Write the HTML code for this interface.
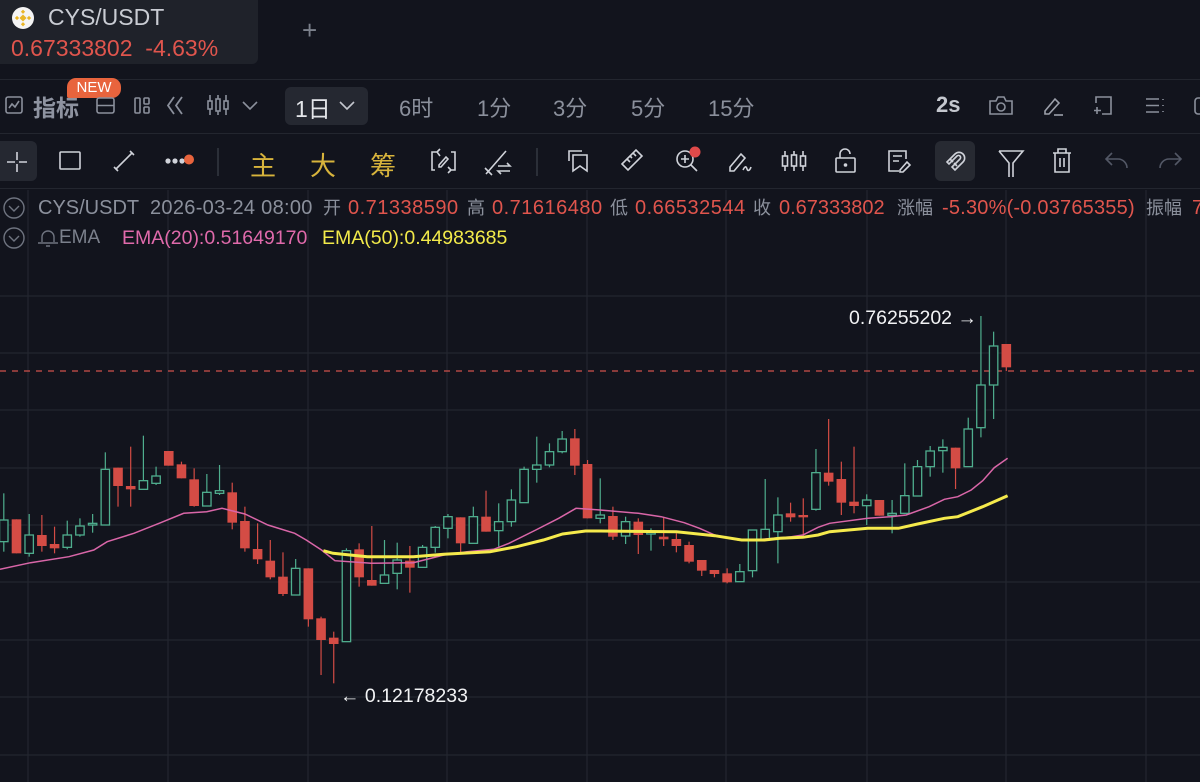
<!DOCTYPE html>
<html><head><meta charset="utf-8"><style>
*{margin:0;padding:0;box-sizing:border-box}
body{width:1200px;height:782px;background:#12141d;overflow:hidden;position:relative;font-family:"Liberation Sans","Noto Sans CJK SC",sans-serif;color:#8b909c}
.a{position:absolute;white-space:nowrap}
.hl{position:absolute;left:0;width:1200px;height:1px;background:#23262f}
.t{font-size:22px;color:#8b909c;top:91px}
.h{top:196px;font-size:20px;line-height:24px;height:24px;color:#8b909c}
.hc{font-size:18px}
.r,.h.r{color:#e0554d}
.n{letter-spacing:0.5px}
svg.i{position:absolute;overflow:visible}
</style></head><body>
<svg id="ch" class="a" style="left:0;top:0" width="1200" height="782"></svg>

<div class="a" style="left:0;top:0;width:258px;height:64px;background:#1f222a;border-radius:0 0 6px 0"></div>
<svg class="i" style="left:12px;top:7px" width="22" height="22"><circle cx="11" cy="11" r="11" fill="#f4f4f4"/><g fill="#e9b627"><rect x="8.5" y="8.5" width="5" height="5" transform="rotate(45 11 11)"/><rect x="9.5" y="3.2" width="3" height="3" transform="rotate(45 11 4.7)"/><rect x="9.5" y="15.8" width="3" height="3" transform="rotate(45 11 17.3)"/><rect x="3.5" y="9.5" width="3" height="3" transform="rotate(45 5 11)"/><rect x="15.5" y="9.5" width="3" height="3" transform="rotate(45 17 11)"/></g></svg>
<div class="a" style="left:48px;top:4px;font-size:23px;color:#c9ccd3">CYS/USDT</div>
<div class="a r" style="left:11px;top:35px;font-size:23px">0.67333802&nbsp; -4.63%</div>
<div class="a" style="left:302px;top:15px;font-size:26px;font-weight:300;color:#7b808b">+</div>

<div class="hl" style="top:79px"></div>
<div class="hl" style="top:133px"></div>
<div class="hl" style="top:188px"></div>

<!-- row 2 -->
<svg class="i" style="left:5px;top:96px" width="18" height="18" fill="none" stroke="#8b909c" stroke-width="1.6"><rect x="1" y="1" width="16" height="16" rx="2"/><path d="M4 12l3-4 3 3 4-6"/></svg>
<div class="a" style="left:33px;top:89px;font-size:23px;font-weight:bold;color:#8e93a0">指标</div>
<div class="a" style="left:67px;top:78px;width:54px;height:20px;background:#e8643d;border-radius:9px 9px 9px 2px;color:#fff;font-size:15px;text-align:center;line-height:20px">NEW</div>
<svg class="i" style="left:96px;top:97px" width="20" height="18" fill="none" stroke="#8b909c" stroke-width="1.6"><rect x="1" y="1" width="17" height="15" rx="2"/><path d="M1 8.5h17"/></svg>
<svg class="i" style="left:134px;top:97px" width="17" height="17" fill="none" stroke="#8b909c" stroke-width="1.6"><rect x="1" y="1" width="5" height="15" rx="1"/><rect x="10" y="1" width="5" height="6" rx="1"/><rect x="10" y="10" width="5" height="6" rx="1"/></svg>
<svg class="i" style="left:166px;top:96px" width="22" height="19" fill="none" stroke="#8b909c" stroke-width="1.8"><path d="M8 1L2 9.5 8 18M16 1L10 9.5 16 18"/></svg>
<svg class="i" style="left:207px;top:94px" width="22" height="22" fill="none" stroke="#8b909c" stroke-width="1.6"><path d="M3 1v20M11 1v20M19 1v20"/><rect x="1" y="7" width="4" height="8" fill="#12141d"/><rect x="9" y="5" width="4" height="12" fill="#12141d"/><rect x="17" y="7" width="4" height="8" fill="#12141d"/></svg>
<svg class="i" style="left:242px;top:101px" width="16" height="9" fill="none" stroke="#8b909c" stroke-width="1.6"><path d="M1 1l7 7 7-7"/></svg>
<div class="a" style="left:285px;top:87px;width:83px;height:38px;background:#252831;border-radius:6px"></div>
<div class="a" style="left:295px;top:90px;font-size:23px;color:#e4e6ea">1日</div>
<svg class="i" style="left:339px;top:101px" width="16" height="9" fill="none" stroke="#c4c7ce" stroke-width="1.6"><path d="M1 1l7 7 7-7"/></svg>
<div class="a t" style="left:399px">6时</div>
<div class="a t" style="left:477px">1分</div>
<div class="a t" style="left:553px">3分</div>
<div class="a t" style="left:631px">5分</div>
<div class="a t" style="left:708px">15分</div>
<div class="a" style="left:936px;top:92px;font-size:22px;font-weight:bold;color:#c4c7ce">2s</div>
<svg class="i" style="left:989px;top:96px" width="24" height="19" fill="none" stroke="#8b909c" stroke-width="1.6"><path d="M1 5h6l2-4h6l2 4h6v13H1z"/><circle cx="12" cy="11" r="4"/></svg>
<svg class="i" style="left:1042px;top:95px" width="22" height="22" fill="none" stroke="#9ca0aa" stroke-width="1.6"><path d="M3 16l10-12 4 4-10 11H3z"/><path d="M12 20h9"/></svg>
<svg class="i" style="left:1093px;top:96px" width="20" height="20" fill="none" stroke="#8b909c" stroke-width="1.6"><path d="M3 7V1h15v17h-9"/><path d="M4 11v7M1 14.5h7"/></svg>
<svg class="i" style="left:1145px;top:98px" width="20" height="16" fill="none" stroke="#8b909c" stroke-width="1.6"><path d="M1 1h13M1 7.5h13M1 14h13M18 1v1M18 7v1M18 13v1"/></svg>
<svg class="i" style="left:1194px;top:97px" width="10" height="18" fill="none" stroke="#8b909c" stroke-width="1.6"><rect x="1" y="1" width="14" height="16" rx="3"/></svg>

<!-- row 3 -->
<div class="a" style="left:0;top:141px;width:37px;height:40px;background:#252831;border-radius:0 6px 6px 0"></div>
<svg class="i" style="left:6px;top:151px" width="22" height="22" fill="none" stroke="#d0d3da" stroke-width="1.6"><path d="M11 1v8M11 13v8M1 11h8M13 11h8"/></svg>
<svg class="i" style="left:59px;top:151px" width="22" height="19" fill="none" stroke="#d0d3da" stroke-width="1.6"><rect x="1" y="1" width="20" height="17" rx="1"/></svg>
<svg class="i" style="left:113px;top:150px" width="22" height="22" fill="none" stroke="#d0d3da" stroke-width="1.6"><path d="M3 19L19 3M1 17l4 4M17 1l4 4"/></svg>
<svg class="i" style="left:164px;top:153px" width="32" height="14"><circle cx="4" cy="8" r="2.6" fill="#d0d3da"/><circle cx="11" cy="8" r="2.6" fill="#d0d3da"/><circle cx="18" cy="8" r="2.6" fill="#d0d3da"/><circle cx="25" cy="6.5" r="5" fill="#e8643d"/></svg>
<div class="a" style="left:217px;top:148px;width:2px;height:28px;background:#2b2f38"></div>
<div class="a" style="left:250px;top:146px;font-size:26px;color:#d8b43c">主</div>
<div class="a" style="left:310px;top:146px;font-size:26px;color:#d8b43c">大</div>
<div class="a" style="left:370px;top:146px;font-size:26px;color:#d8b43c">筹</div>
<svg class="i" style="left:431px;top:148px" width="26" height="28" fill="none" stroke="#d0d3da" stroke-width="1.6"><path d="M6 4H1v18h3M20 4h4v18h-5M9 8l-3-4 3-3M17 19l3 3-3 3M8 17l7-8 2 2-7 8H8z"/></svg>
<svg class="i" style="left:484px;top:150px" width="28" height="26" fill="none" stroke="#d0d3da" stroke-width="1.6"><path d="M2 24L22 1M1 18l7 7M14 16h12l-3-3M26 21H14l3 3"/></svg>
<div class="a" style="left:536px;top:148px;width:2px;height:28px;background:#2b2f38"></div>
<svg class="i" style="left:568px;top:150px" width="22" height="22" fill="none" stroke="#d0d3da" stroke-width="1.6"><path d="M1 11V1h13"/><path d="M5 5h14v16l-7-5-7 5z"/></svg>
<svg class="i" style="left:620px;top:148px" width="24" height="24" fill="none" stroke="#d0d3da" stroke-width="1.6"><path d="M2 16L16 2l6 6L8 22z"/><path d="M7 11l3 3M10 8l2 2M13 5l3 3"/></svg>
<svg class="i" style="left:675px;top:148px" width="28" height="28" fill="none" stroke="#d0d3da" stroke-width="1.6"><circle cx="10" cy="11" r="8"/><path d="M16 17l6 6M6 11h8M10 7v8"/><circle cx="20" cy="4" r="5.5" fill="#e04a4a" stroke="none"/></svg>
<svg class="i" style="left:728px;top:150px" width="26" height="24" fill="none" stroke="#d0d3da" stroke-width="1.6"><path d="M2 17L13 4l4 4L6 21H2z"/><path d="M15 20c2-4 3-4 4-1s3 1 4-2"/></svg>
<svg class="i" style="left:781px;top:150px" width="26" height="22" fill="none" stroke="#d0d3da" stroke-width="1.6"><path d="M4 1v20M13 1v20M22 1v20"/><rect x="1.5" y="6" width="5" height="10" fill="#12141d"/><rect x="10.5" y="5" width="5" height="11" fill="#12141d"/><rect x="19.5" y="6" width="5" height="10" fill="#12141d"/></svg>
<svg class="i" style="left:835px;top:148px" width="22" height="26" fill="none" stroke="#d0d3da" stroke-width="1.6"><path d="M5 10V6a5 5 0 0 1 10 0"/><rect x="1" y="10" width="19" height="14" rx="1"/><circle cx="10.5" cy="17" r="1" fill="#d0d3da"/></svg>
<svg class="i" style="left:888px;top:150px" width="24" height="24" fill="none" stroke="#d0d3da" stroke-width="1.6"><path d="M11 21H1V1h17v8M5 6h9M5 11h6"/><path d="M12 20l7-8 3 3-7 7h-3z"/></svg>
<div class="a" style="left:935px;top:141px;width:40px;height:40px;background:#272a32;border-radius:6px"></div>
<svg class="i" style="left:942px;top:149px" width="26" height="26" fill="none" stroke="#d0d3da" stroke-width="1.6"><path d="M5 13L13 5a5 5 0 0 1 8 8l-8 8-3-3 8-8a1.5 1.5 0 0 0-3-3l-8 8z"/><path d="M8 10l3 3M12 14l3 3"/></svg>
<svg class="i" style="left:998px;top:150px" width="26" height="28" fill="none" stroke="#d0d3da" stroke-width="1.6"><path d="M1 1h24L15 13v14M11 27V13L1 1"/></svg>
<svg class="i" style="left:1052px;top:148px" width="20" height="26" fill="none" stroke="#d0d3da" stroke-width="1.6"><path d="M1 5h18M6 5V1h8v4M3 5v19h14V5M8 10v9M12 10v9"/></svg>
<svg class="i" style="left:1105px;top:152px" width="24" height="18" fill="none" stroke="#535866" stroke-width="1.6"><path d="M7 1L1 7l6 6M1 7h12a9 9 0 0 1 9 9"/></svg>
<svg class="i" style="left:1158px;top:152px" width="24" height="18" fill="none" stroke="#535866" stroke-width="1.6"><path d="M17 1l6 6-6 6M23 7H11a9 9 0 0 0-9 9"/></svg>

<!-- info rows -->
<svg class="i" style="left:3px;top:197px" width="22" height="22" fill="none" stroke="#6f7480" stroke-width="1.4"><circle cx="11" cy="11" r="10"/><path d="M6 9l5 5 5-5"/></svg>
<div class="a h" style="left:38px">CYS/USDT</div>
<div class="a h" style="left:150px;letter-spacing:0.3px">2026-03-24 08:00</div>
<div class="a h hc" style="left:323px">开</div><div class="a h r n" style="left:348px">0.71338590</div>
<div class="a h hc" style="left:467px">高</div><div class="a h r n" style="left:492px">0.71616480</div>
<div class="a h hc" style="left:610px">低</div><div class="a h r n" style="left:635px">0.66532544</div>
<div class="a h hc" style="left:753px">收</div><div class="a h r" style="left:779px">0.67333802</div>
<div class="a h hc" style="left:897px">涨幅</div><div class="a h r" style="left:942px;letter-spacing:0.2px">-5.30%(-0.03765355)</div>
<div class="a h hc" style="left:1146px">振幅</div><div class="a h r" style="left:1192px">7.13%</div>
<svg class="i" style="left:3px;top:227px" width="22" height="22" fill="none" stroke="#6f7480" stroke-width="1.4"><circle cx="11" cy="11" r="10"/><path d="M6 9l5 5 5-5"/></svg>
<svg class="i" style="left:37px;top:229px" width="22" height="18" fill="none" stroke="#6f7480" stroke-width="1.4"><path d="M5 13V8a6 6 0 0 1 12 0v5M1 14h20M9 17h4"/></svg>
<div class="a" style="left:59px;top:227px;font-size:19px;color:#7b808c">EMA</div>
<div class="a" style="left:122px;top:227px;font-size:19.5px;color:#e06aab">EMA(20):0.51649170</div>
<div class="a" style="left:322px;top:227px;font-size:19.5px;color:#f2ea4a">EMA(50):0.44983685</div>

<div class="a" style="left:849px;top:307px;font-size:19.5px;color:#f2f3f5">0.76255202 →</div>
<div class="a" style="left:340px;top:685px;font-size:19.5px;color:#f2f3f5">← 0.12178233</div>

<script>
var C=[
['g',840,905,760,935],['r',838,940,838,940],['g',885,940,822,950],['r',885,918,825,935],['r',912,925,860,940],['g',885,922,842,928],['g',858,885,835,890],['g',850,855,822,878],['g',688,855,637,855],['r',683,738,683,800],
['r',738,748,620,800],['g',722,748,587,748],['g',708,730,680,735],['r',633,677,633,677],['r',673,715,665,715],['r',718,798,685,800],['g',757,798,702,798],['g',752,760,675,765],['r',757,848,728,868],['r',843,925,800,935],
['r',927,958,850,972],['r',962,1012,900,1018],['r',1010,1062,937,1068],['g',985,1065,957,1065],['r',985,1138,985,1160],['r',1135,1200,1130,1305],['r',1193,1212,1175,1330],['g',932,1205,925,1205],['r',928,1012,910,1040],['r',1020,1037,858,1037],
['g',1005,1030,900,1030],['g',960,1000,908,1048],['r',962,983,918,1058],['g',922,982,915,982],['g',862,922,858,938],['g',830,865,822,895],['r',832,910,832,940],['g',830,910,800,910],['r',830,875,752,875],['g',845,872,790,920],
['g',780,845,748,860],['g',688,788,680,788],['g',675,688,590,728],['g',635,675,610,682],['g',597,635,573,640],['r',595,677,567,705],['r',672,835,660,835],['g',825,835,715,850],['r',828,890,800,900],['g',845,888,830,912],
['r',845,885,835,942],['g',875,882,865,932],['r',890,898,832,918],['r',897,918,880,937],['r',915,965,905,970],['r',960,992,960,1008],['r',990,1002,990,1012],['r',1000,1027,985,1030],['g',995,1025,972,1025],['g',870,992,870,1012],
['g',868,900,717,900],['g',825,875,772,970],['r',820,832,788,845],['r',825,832,775,895],['g',698,808,627,812],['r',698,725,537,737],['r',717,788,665,825],['r',785,798,620,820],['g',780,797,763,855],['r',780,827,780,827],
['g',820,826,780,880],['g',767,820,670,820],['g',680,768,660,768],['g',633,680,618,710],['g',622,632,598,698],['r',623,685,623,747],['g',567,680,533,680],['g',435,563,228,592],['g',318,435,275,537],['r',312,382,312,393]];
function Y(v){return v/3+240}
var s='';
[296,353,410,468,525,582,640,697,755].forEach(function(y){s+='<line x1="0" x2="1200" y1="'+y+'" y2="'+y+'" stroke="#23262f" stroke-width="1.2"/>'});
[28,168,308,447,587,726,867,1006,1146].forEach(function(x){s+='<line y1="190" y2="782" x1="'+x+'" x2="'+x+'" stroke="#23262f" stroke-width="1.2"/>'});
s+='<line x1="0" x2="1200" y1="371" y2="371" stroke="#d0504c" stroke-width="1.2" stroke-dasharray="6,6"/>';
var GC='#4fae8e',RC='#d44c45';
C.forEach(function(c,i){
 var x=3.8+i*12.69, col=c[0]=='g'?GC:RC;
 var t=Y(c[1]),b=Y(c[2]),h=Y(c[3]),l=Y(c[4]);
 if(b-t<1.5)b=t+1.5;
 s+='<line x1="'+x+'" x2="'+x+'" y1="'+h+'" y2="'+l+'" stroke="'+col+'" stroke-width="1.2"/>';
 if(c[0]=='g') s+='<rect x="'+(x-4.2)+'" y="'+t+'" width="8.4" height="'+(b-t)+'" fill="#12141d" stroke="'+col+'" stroke-width="1.3"/>';
 else s+='<rect x="'+(x-4.8)+'" y="'+t+'" width="9.6" height="'+(b-t)+'" fill="'+col+'"/>';
});
function P(a3,a4){var p=[];a3.forEach(function(q){p.push((q[0]/2.613).toFixed(1)+','+Y(q[1]).toFixed(1))});a4.forEach(function(q){p.push((600+q[0]/2.613).toFixed(1)+','+Y(q[1]).toFixed(1))});return p.join(' ')}
var pink=P([[0,988],[80,968],[180,950],[245,930],[280,905],[350,880],[420,848],[480,820],[540,815],[580,805],[640,822],[700,855],[770,880],[800,900],[840,930],[875,962],[970,970],[1080,968],[1160,945],[1220,935],[1290,928],[1330,910],[1400,870],[1460,835],[1505,805],[1568,810]],
[[100,820],[160,830],[220,848],[260,865],[300,885],[360,900],[400,900],[500,890],[530,885],[570,862],[600,850],[700,835],[760,830],[800,825],[860,800],[900,778],[935,770],[970,750],[1000,722],[1030,683],[1065,655]]);
var yel=P([[845,932],[870,940],[960,950],[1080,950],[1160,943],[1280,935],[1350,920],[1420,900],[1470,882],[1530,873],[1568,873]],
[[200,875],[300,887],[370,900],[430,900],[470,895],[530,892],[570,885],[600,875],[700,865],[780,865],[830,852],[900,835],[935,830],[1000,800],[1065,767]]);
s+='<polyline points="'+pink+'" fill="none" stroke="#d966a8" stroke-width="1.5"/>';
s+='<polyline points="'+yel+'" fill="none" stroke="#f5ea4c" stroke-width="3"/>';
document.getElementById('ch').innerHTML=s;
</script>
</body></html>
